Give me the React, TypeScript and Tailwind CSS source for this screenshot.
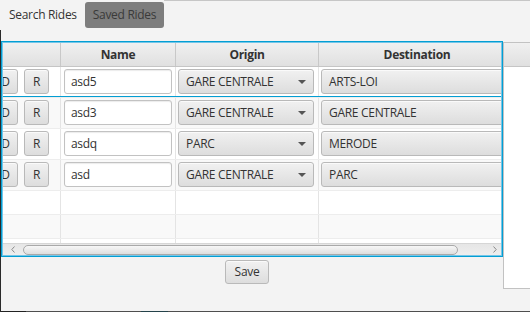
import React from "react";

const rows = [
  { name: "asd5", origin: "GARE CENTRALE", dest: "ARTS-LOI" },
  { name: "asd3", origin: "GARE CENTRALE", dest: "GARE CENTRALE" },
  { name: "asdq", origin: "PARC", dest: "MERODE" },
  { name: "asd", origin: "GARE CENTRALE", dest: "PARC" },
];

function Btn({ children, className = "" }: { children: React.ReactNode; className?: string }) {
  return (
    <div
      className={
        "flex items-center rounded-[3px] border border-[#b9b9b9] bg-linear-to-b from-[#f1f1f1] to-[#dddddd] text-[#333] shadow-[inset_0_1px_0_#fafafa] " +
        className
      }
    >
      {children}
    </div>
  );
}

function Row({ r, i }: { r: (typeof rows)[number]; i: number }) {
  const bg = i % 2 === 0 ? "bg-white" : "bg-[#f9f9f9]";
  return (
    <div className={"relative flex h-[31px] shrink-0 border-b border-[#ededed] " + bg}>
      <div className="flex w-[58px] shrink-0 gap-[6px] border-r border-[#e4e4e4] pt-[2px]">
        <Btn className="-ml-[10px] h-[25px] w-[25px] shrink-0 justify-center">D</Btn>
        <Btn className="h-[25px] w-[25px] shrink-0 justify-center">R</Btn>
      </div>
      <div className="flex w-[115px] shrink-0 border-r border-[#e4e4e4] px-[3px] pt-[2px]">
        <div className="flex h-[25px] w-full items-center rounded-[3px] border border-[#c2c2c2] bg-white pl-[6px] text-[#333] shadow-[inset_0_1px_1px_#ececec]">
          {r.name}
        </div>
      </div>
      <div className="flex w-[143px] shrink-0 border-r border-[#e4e4e4] pl-[2px] pt-[2px]">
        <Btn className="h-[25px] w-[136px] justify-between pl-[7px] pr-[7px]">
          <span>{r.origin}</span>
          <svg width="8" height="4" viewBox="0 0 8 4">
            <path d="M0 0 L8 0 L4 4 Z" fill="#555" />
          </svg>
        </Btn>
      </div>
      <div className="flex w-[196px] shrink-0 pl-[2px] pt-[2px]">
        <Btn className="h-[25px] w-[191px] pl-[7px]">{r.dest}</Btn>
      </div>
      {i === 0 && (
        <div className="pointer-events-none absolute inset-x-0 -top-px bottom-0 border-y border-[#039ed3]" />
      )}
    </div>
  );
}

function EmptyRow({ i }: { i: number }) {
  const bg = i % 2 === 0 ? "bg-white" : "bg-[#f9f9f9]";
  return (
    <div className={"flex h-[24px] shrink-0 border-b border-[#ededed] " + bg}>
      <div className="w-[58px] shrink-0 border-r border-[#e4e4e4]" />
      <div className="w-[115px] shrink-0 border-r border-[#e4e4e4]" />
      <div className="w-[143px] shrink-0 border-r border-[#e4e4e4]" />
      <div className="w-[196px] shrink-0" />
    </div>
  );
}

export default function App() {
  return (
    <div className="relative flex h-[312px] w-[530px] flex-col overflow-hidden bg-[#f3f3f3] font-['Open_Sans',sans-serif] text-[12px] tracking-[-0.3px] text-[#333]">
      {/* tab header */}
      <div className="flex h-[30px] shrink-0 items-start">
        <div className="flex h-[28px] items-center pl-[9px] pr-[8px] pt-[2px]">Search Rides</div>
        <div className="mt-[2px] flex h-[26px] items-center rounded-[3px] bg-[#7d7d7d] px-[8px] text-[#3a3a3a]">
          Saved Rides
        </div>
        <div className="h-[1px] flex-1 bg-[#c6c6c6]" />
      </div>

      {/* content */}
      <div className="flex flex-1 flex-col border-l border-[#2a2a2a]">
        <div className="flex flex-1 pt-[11px]">
          <div className="flex w-[502px] shrink-0 flex-col">
            <div className="border border-[#039ed3]">
              <div className="flex h-[214px] flex-col overflow-hidden border border-[#74c6e8] bg-white">
                {/* header */}
                <div className="flex h-[24px] shrink-0 border-b border-[#c5c5c5] bg-linear-to-b from-[#f0f0f0] to-[#e0e0e0] font-bold">
                  <div className="w-[58px] shrink-0 border-r border-[#c8c8c8]" />
                  <div className="flex w-[115px] shrink-0 items-center justify-center border-r border-[#c8c8c8]">Name</div>
                  <div className="flex w-[143px] shrink-0 items-center justify-center border-r border-[#c8c8c8]">Origin</div>
                  <div className="flex w-[196px] shrink-0 items-center justify-center">Destination</div>
                </div>
                {/* body */}
                <div className="flex h-[176px] shrink-0 flex-col overflow-hidden">
                  {rows.map((r, i) => (
                    <Row key={i} r={r} i={i} />
                  ))}
                  <EmptyRow i={0} />
                  <EmptyRow i={1} />
                  <EmptyRow i={2} />
                </div>
                {/* scrollbar */}
                <div className="flex h-[12px] shrink-0 items-center border-t border-[#d6d6d6] bg-linear-to-b from-[#e6e6e6] to-[#eeeeee]">
                  <div className="flex w-[20px] justify-center">
                    <svg width="4" height="7" viewBox="0 0 4 7">
                      <path d="M3.5 0.5 L0.8 3.5 L3.5 6.5" stroke="#8a8a8a" fill="none" strokeWidth="1" />
                    </svg>
                  </div>
                  <div className="h-[10px] w-[435px] rounded-[5px] border border-[#a9a9a9] bg-linear-to-b from-[#f7f7f7] to-[#dedede]" />
                  <div className="flex flex-1 justify-end pr-[4px]">
                    <svg width="4" height="7" viewBox="0 0 4 7">
                      <path d="M0.5 0.5 L3.2 3.5 L0.5 6.5" stroke="#8a8a8a" fill="none" strokeWidth="1" />
                    </svg>
                  </div>
                </div>
              </div>
            </div>
            <div className="flex pl-[224px] pt-[3px]">
              <Btn className="h-[24px] w-[44px] justify-center">Save</Btn>
            </div>
          </div>
          <div className="mt-[1px] flex h-[247px] flex-1 flex-col border-b border-l border-t border-[#c2c2c2] bg-white">
            <div className="h-[24px] border-b border-[#c5c5c5] bg-linear-to-b from-[#f0f0f0] to-[#e0e0e0]" />
          </div>
        </div>
        <div className="flex h-[1px] shrink-0">
          <div className="w-[25px] bg-[#222]" />
          <div className="w-[115px] bg-[#4e4e4e]" />
          <div className="w-[27px] bg-[#24424a]" />
          <div className="flex-1 bg-[#4e4e4e]" />
        </div>
      </div>
    </div>
  );
}
